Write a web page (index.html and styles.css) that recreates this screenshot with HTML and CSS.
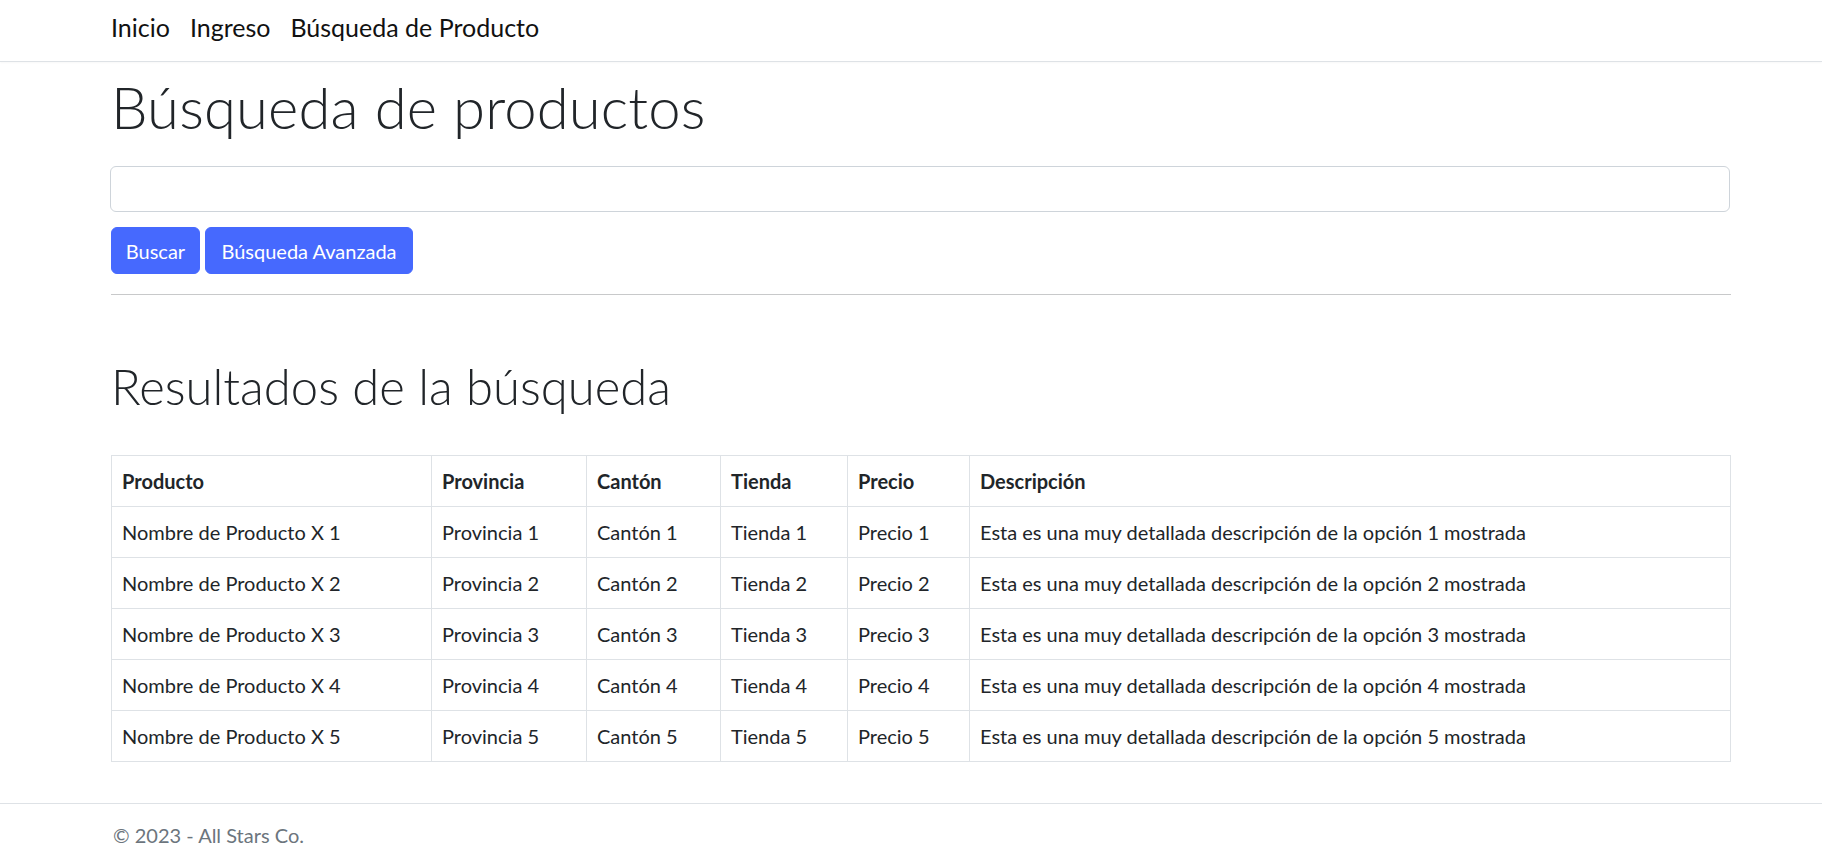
FILE: index.html
```html
<!DOCTYPE html>
<html lang="es">
<head>
<meta charset="utf-8">
<title>Búsqueda de productos</title>
<link rel="stylesheet" href="styles.css">
</head>
<body>
<header class="navbar">
  <nav class="container nav">
    <a class="nav-link" href="#">Inicio</a>
    <a class="nav-link" href="#">Ingreso</a>
    <a class="nav-link" href="#">Búsqueda de Producto</a>
  </nav>
</header>
<main class="container">
  <h1 class="title">Búsqueda de productos</h1>
  <input class="search-input" type="text" aria-label="Buscar">
  <div class="actions">
    <button class="btn btn-buscar" type="button">Buscar</button>
    <button class="btn btn-avanzada" type="button">Búsqueda Avanzada</button>
  </div>
  <hr class="divider">
  <h2 class="subtitle">Resultados de la búsqueda</h2>
  <table class="results">
    <colgroup>
      <col class="c-prod"><col class="c-prov"><col class="c-cant"><col class="c-tienda"><col class="c-precio"><col class="c-desc">
    </colgroup>
    <thead>
      <tr><th>Producto</th><th>Provincia</th><th>Cantón</th><th>Tienda</th><th>Precio</th><th>Descripción</th></tr>
    </thead>
    <tbody>
      <tr><td>Nombre de Producto X 1</td><td>Provincia 1</td><td>Cantón 1</td><td>Tienda 1</td><td>Precio 1</td><td>Esta es una muy detallada descripción de la opción 1 mostrada</td></tr>
      <tr><td>Nombre de Producto X 2</td><td>Provincia 2</td><td>Cantón 2</td><td>Tienda 2</td><td>Precio 2</td><td>Esta es una muy detallada descripción de la opción 2 mostrada</td></tr>
      <tr><td>Nombre de Producto X 3</td><td>Provincia 3</td><td>Cantón 3</td><td>Tienda 3</td><td>Precio 3</td><td>Esta es una muy detallada descripción de la opción 3 mostrada</td></tr>
      <tr><td>Nombre de Producto X 4</td><td>Provincia 4</td><td>Cantón 4</td><td>Tienda 4</td><td>Precio 4</td><td>Esta es una muy detallada descripción de la opción 4 mostrada</td></tr>
      <tr><td>Nombre de Producto X 5</td><td>Provincia 5</td><td>Cantón 5</td><td>Tienda 5</td><td>Precio 5</td><td>Esta es una muy detallada descripción de la opción 5 mostrada</td></tr>
    </tbody>
  </table>
</main>
<footer class="footer">
  <div class="container footer-text">© 2023 - All Stars Co.</div>
</footer>
</body>
</html>
```
FILE: styles.css
```css
* { box-sizing: border-box; }
html, body { margin: 0; padding: 0; }
body {
  font-family: "Lato", "Liberation Sans", sans-serif;
  font-size: 20px;
  line-height: 1.5;
  color: #212529;
  background: #fff;
  overflow: hidden;
}
.container {
  width: 1620px;
  margin-left: 111px;
}
.navbar {
  border-bottom: 1px solid #dee2e6;
  padding: 8px 0 15px;
  box-shadow: 0 1px 2px rgba(0,0,0,0.03);
}
.nav {
  display: flex;
  gap: 20px;
}
.nav-link {
  font-size: 25px;
  line-height: 38px;
  color: #111;
  text-decoration: none;
}
.title {
  margin: 10px 0 24px;
  font-size: 58px;
  font-weight: 300;
  line-height: 70px;
  letter-spacing: 0.15px;
}
.search-input {
  display: block;
  width: 100%;
  height: 46px;
  margin: 0 0 0 -1px;
  border: 1px solid #ced4da;
  border-radius: 6px;
  padding: 7px 15px;
  font: inherit;
  background: #fff;
}
.actions {
  display: flex;
  gap: 5px;
  margin-top: 15px;
}
.btn {
  height: 47px;
  border: 1px solid #4669fe;
  border-radius: 6px;
  background: #4669fe;
  color: #fff;
  font: inherit;
  font-size: 20px;
  line-height: 30px;
  text-align: center;
}
.btn-buscar { width: 89px; padding: 0; }
.btn-avanzada { width: 208px; padding: 0; }
.divider {
  margin: 20px 0 62px;
  border: 0;
  border-top: 1px solid #c8c9ca;
}
.subtitle {
  margin: 0 0 39px;
  font-size: 49px;
  font-weight: 300;
  line-height: 59px;
}
.results {
  width: 1620px;
  table-layout: fixed;
  border-collapse: collapse;
}
.results th, .results td {
  border: 1px solid #dee2e6;
  padding: 10px;
  height: 51px;
  text-align: left;
  vertical-align: middle;
  white-space: nowrap;
}
.results th { font-weight: 700; color: #212529; }
.c-prod { width: 320px; }
.c-prov { width: 155px; }
.c-cant { width: 134px; }
.c-tienda { width: 127px; }
.c-precio { width: 122px; }
.c-desc { width: auto; }
.footer {
  margin-top: 41px;
  border-top: 1px solid #dee2e6;
  padding: 16px 0 20px;
}
.footer-text {
  color: #6c757d;
  font-size: 20px;
  line-height: 30px;
  padding-left: 2px;
}
```
